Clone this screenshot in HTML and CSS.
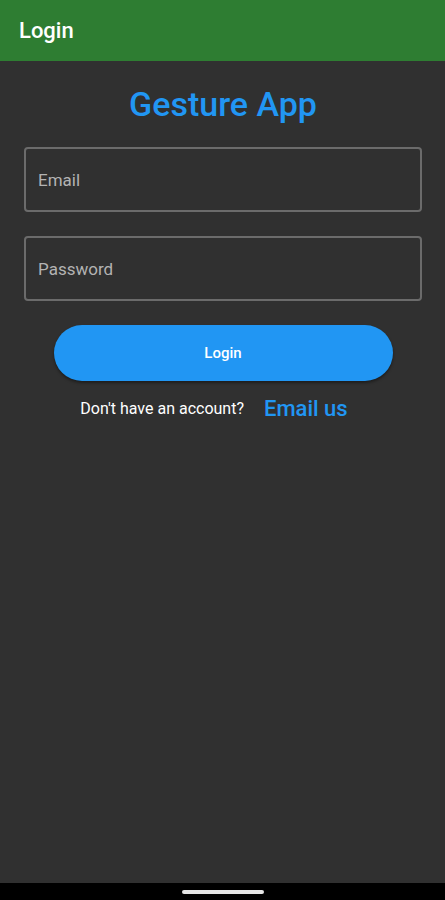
FILE: index.html
```html
<!DOCTYPE html>
<html lang="en">
<head>
  <meta charset="UTF-8" />
  <meta name="viewport" content="width=device-width, initial-scale=1.0" />
  <title>Login</title>
  <link rel="stylesheet" href="styles.css">
</head>
<body>
  <div class="app">
    <header class="appbar">
      <h1>Login</h1>
    </header>

    <main class="contenido">
      <h2 class="titulo">Gesture App</h2>
      <div class="campo">
        <input type="email" placeholder="Email">
      </div>
      <div class="campo">
        <input type="password" placeholder="Password">
      </div>
      <button class="login-btn">Login</button>
      <div class="registro">
        <span>Don't have an account?</span>
        <a class="email-link">Email us</a>
      </div>
    </main>

    <div class="navbar">
      <span class="pill"></span>
    </div>
  </div>
</body>
</html>
```

FILE: styles.css
```css
:root {
  --green: #2e7d32;
  --blue: #2196f3;
  --dark: #303030;
  --white: #ffffff;
}

* {
  box-sizing: border-box;
  margin: 0;
  padding: 0;
  font-family: Roboto, "Noto Sans", sans-serif;
}

body {
  background: var(--dark);
  color: var(--white);
}

.app {
  display: flex;
  flex-direction: column;
  height: 900px;
}

.appbar {
  background: var(--green);
  height: 61px;
  display: flex;
  align-items: center;
  padding: 0 19px;
}

.appbar h1 {
  font-size: 22px;
  font-weight: 500;
}

.contenido {
  flex: 1;
  display: flex;
  flex-direction: column;
  align-items: center;
  padding: 21px 23px 0 24px;
}

.titulo {
  color: var(--blue);
  font-size: 34px;
  font-weight: 500;
  line-height: 44px;
  margin-bottom: 21px;
}

.campo {
  width: 100%;
  margin-bottom: 24px;
}

.campo input {
  width: 100%;
  height: 65px;
  background: transparent;
  border: 2px solid #6b6b6b;
  border-radius: 4px;
  padding: 0 12px;
  font-size: 17px;
  color: var(--white);
  outline: none;
}

.campo input::placeholder {
  color: #b3b3b3;
}

.login-btn {
  width: 339px;
  height: 56px;
  border: none;
  border-radius: 28px;
  background: var(--blue);
  color: var(--white);
  font-size: 15px;
  font-weight: 500;
  box-shadow: 0 2px 3px rgba(0, 0, 0, 0.4);
  cursor: pointer;
}

.registro {
  display: flex;
  align-items: center;
  gap: 20px;
  margin-top: 15px;
  margin-right: 18px;
}

.registro span {
  font-size: 16px;
}

.email-link {
  color: var(--blue);
  font-size: 22px;
  font-weight: 500;
  cursor: pointer;
}

.navbar {
  background: #000000;
  height: 17px;
  display: flex;
  justify-content: center;
  align-items: center;
}

.pill {
  width: 82px;
  height: 4px;
  border-radius: 2px;
  background: #e6e6e6;
}
```
